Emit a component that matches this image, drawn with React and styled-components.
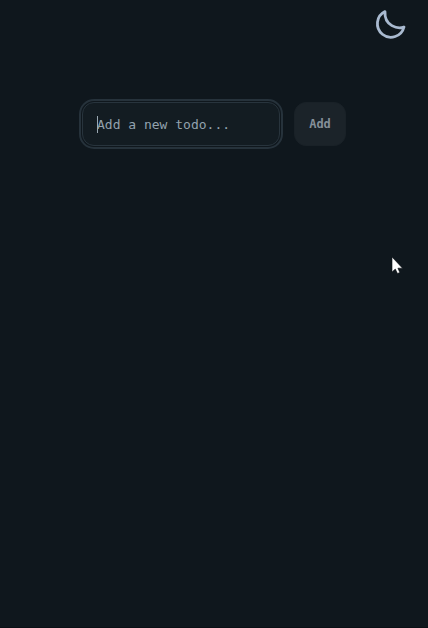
import React, { useState } from "react";
import styled, { createGlobalStyle } from "styled-components";

const GlobalStyle = createGlobalStyle`
  *, *::before, *::after { box-sizing: border-box; }
  body {
    margin: 0;
    background: #0f171d;
    font-family: "DejaVu Sans Mono", monospace;
  }
`;

const Page = styled.div`
  position: relative;
  display: flex;
  flex-direction: column;
  min-height: 100vh;
  border-bottom: 1px solid #0a1015;
`;

const Header = styled.header`
  display: flex;
  justify-content: flex-end;
  padding: 7px 20px 0;
`;

const ThemeButton = styled.button`
  display: flex;
  padding: 0;
  border: 0;
  background: none;
  color: #a9bad0;
  cursor: pointer;
`;

const Main = styled.main`
  display: flex;
  justify-content: center;
  padding: 60px 16px;
`;

const TodoForm = styled.form`
  display: flex;
  gap: 14px;
`;

const Field = styled.label`
  position: relative;
  display: flex;
`;

const TodoInput = styled.input`
  width: 198px;
  height: 44px;
  padding: 0 14px;
  border: 1px solid #28343d;
  border-radius: 12px;
  outline: 2px solid #26323b;
  outline-offset: 1px;
  background: #131c22;
  color: #a3b8c6;
  font-family: inherit;
  font-size: 13px;
  caret-color: transparent;

  &::placeholder {
    color: #92a2ae;
    opacity: 1;
  }
`;

const Caret = styled.span`
  position: absolute;
  top: 14px;
  left: 15px;
  width: 1px;
  height: 17px;
  background: #9aa8b2;
`;

const AddButton = styled.button`
  width: 52px;
  height: 44px;
  padding: 0;
  border: 1px solid #192127;
  border-radius: 12px;
  background: #1b2329;
  color: #859099;
  font-family: inherit;
  font-size: 12px;
  font-weight: 700;
`;

const Pointer = styled.svg`
  position: absolute;
  top: 256px;
  left: 391px;
  pointer-events: none;
`;

export default function App() {
  const [text, setText] = useState("");
  return (
    <>
      <GlobalStyle />
      <Page>
        <Header>
          <ThemeButton type="button" aria-label="Toggle theme">
            <svg width="35" height="35" viewBox="0 0 35 35" fill="none" stroke="currentColor" strokeWidth="2.8" strokeLinecap="round" strokeLinejoin="round">
              <path d="M12 4.6A13.5 13.5 0 1 0 31 20C25 22.5 11 19 12 4.6Z" />
            </svg>
          </ThemeButton>
        </Header>
        <Main>
          <TodoForm onSubmit={(e) => e.preventDefault()}>
            <Field>
              <TodoInput
                aria-label="New todo"
                placeholder="Add a new todo..."
                value={text}
                onChange={(e) => setText(e.target.value)}
              />
              {text === "" && <Caret />}
            </Field>
            <AddButton type="submit">Add</AddButton>
          </TodoForm>
        </Main>
        <Pointer width="13" height="19" viewBox="0 0 13 19" aria-hidden="true">
          <path d="M1 1V16L4.3 13L6.5 17.5L8.8 16.5L6.9 12.2H11.5Z" fill="#fff" stroke="#0b1116" strokeWidth="0.6" />
        </Pointer>
      </Page>
    </>
  );
}
